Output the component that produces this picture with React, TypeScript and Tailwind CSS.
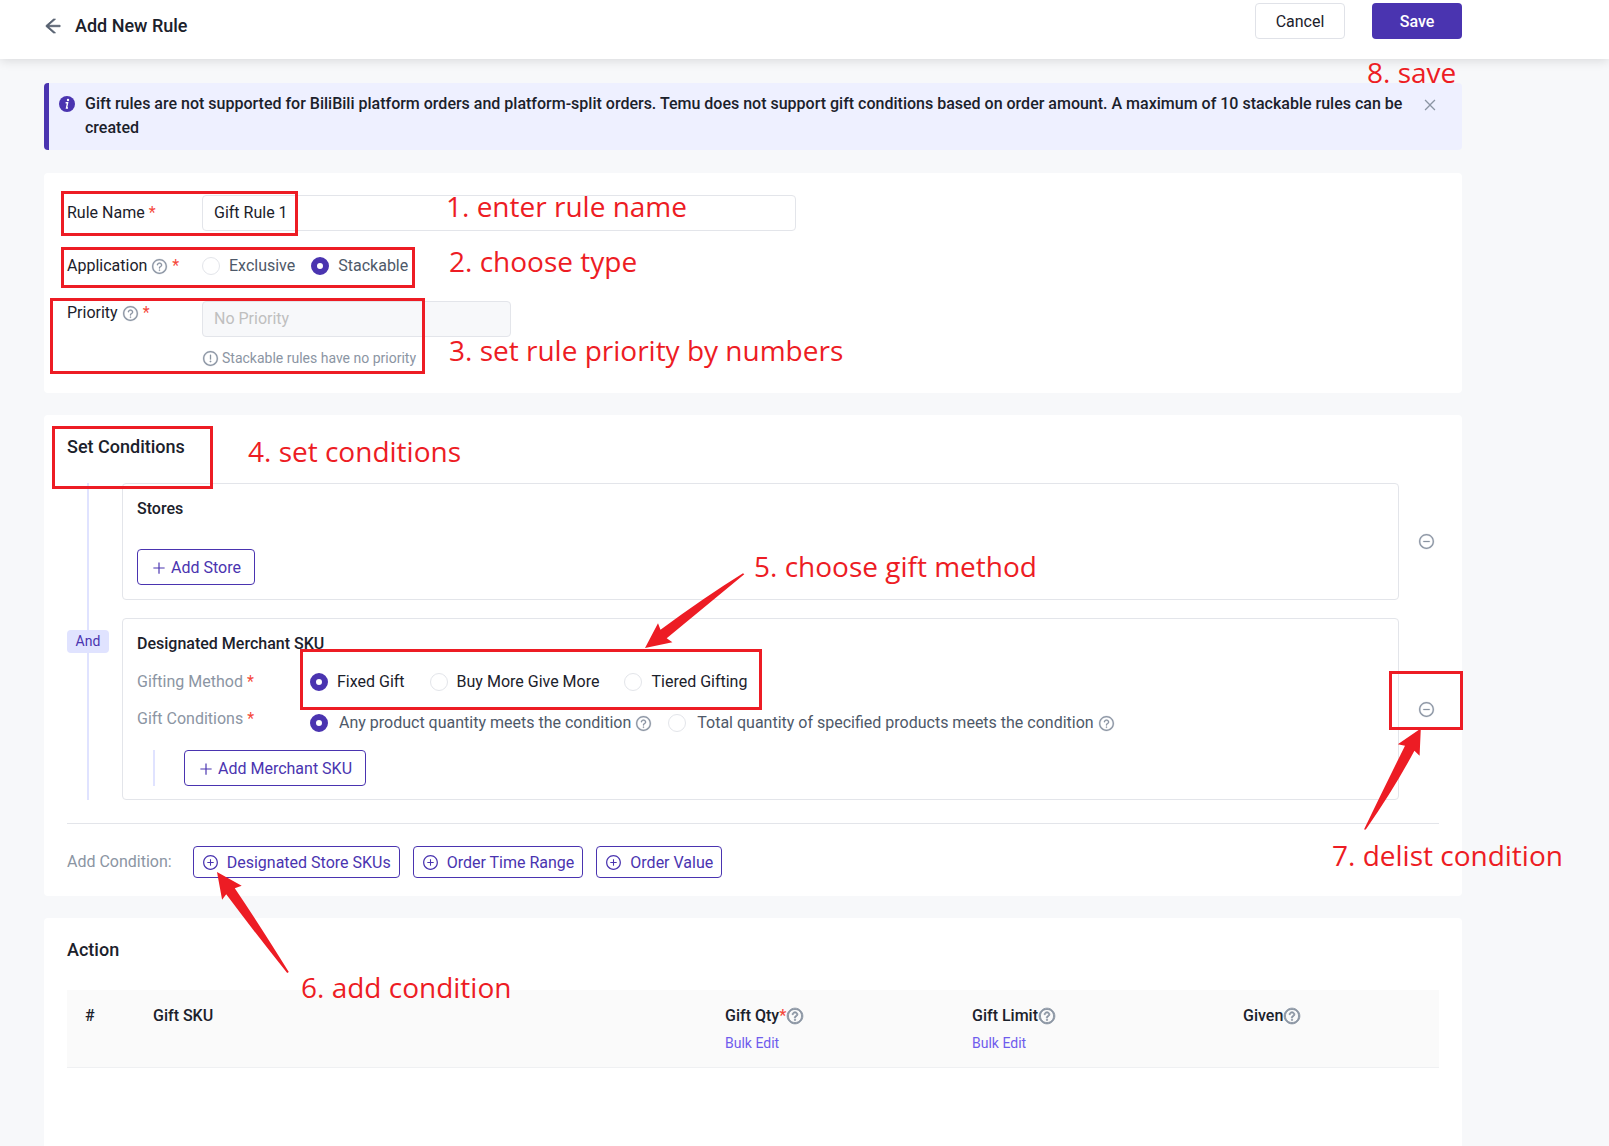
import type { ReactNode } from "react";
import {
  AiOutlineArrowLeft,
  AiOutlineClose,
  AiOutlineExclamationCircle,
  AiOutlineMinusCircle,
  AiOutlinePlus,
  AiOutlinePlusCircle,
  AiOutlineQuestionCircle,
} from "react-icons/ai";

const Help = ({ label, bold }: { label: string; bold?: boolean }) => (
  <button type="button" aria-label={label} className="text-[#8b95a3]">
    <AiOutlineQuestionCircle className={bold ? "size-[18px] stroke-[50]" : "size-[17px] stroke-[15]"} />
  </button>
);

const Required = () => <span className="text-[#f5483b]">*</span>;

const Radio = ({ id, name, checked, labelClass, children }: any) => (
  <div className="flex items-center">
    <input
      type="radio"
      id={id}
      name={name}
      defaultChecked={checked}
      className="size-[18px] shrink-0 appearance-none rounded-full border border-[#e3e5ea] bg-white checked:border-[6px] checked:border-[#4a34b0]"
    />
    <label htmlFor={id} className={labelClass}>
      {children}
    </label>
  </div>
);

const OutlineButton = ({ children }: { children: ReactNode }) => (
  <button
    type="button"
    className="flex h-9 items-center gap-1 rounded border border-[#4a34b0] px-[13px] pt-px text-[#4a34b0]"
  >
    <AiOutlinePlus />
    {children}
  </button>
);

const RemoveButton = ({ label }: { label: string }) => (
  <button type="button" aria-label={label} className="text-[#8b95a3]">
    <AiOutlineMinusCircle className="size-[17px] stroke-[15]" />
  </button>
);

const Card = ({ className = "", children }: any) => (
  <section className={`mb-[22px] rounded bg-white px-[23px] ${className}`}>{children}</section>
);

const extraConditions = ["Designated Store SKUs", "Order Time Range", "Order Value"];

const frames = [
  "left-[61px] top-[191px] h-[45px] w-[237px]",
  "left-[61px] top-[247px] h-[41px] w-[354px]",
  "left-[50px] top-[298px] h-[76px] w-[375px]",
  "left-[52px] top-[426px] h-[63px] w-[161px]",
  "left-[300px] top-[649px] h-[61px] w-[462px]",
  "left-[1389px] top-[671px] h-[59px] w-[74px]",
];

const notes = [
  { text: "1. enter rule name", className: "left-[446px] top-[186px]" },
  { text: "2. choose type", className: "left-[449px] top-[241px]" },
  { text: "3. set rule priority by numbers", className: "left-[449px] top-[330px]" },
  { text: "4. set conditions", className: "left-[248px] top-[431px]" },
  { text: "5. choose gift method", className: "left-[754px] top-[546px]" },
  { text: "6. add condition", className: "left-[301px] top-[967px]" },
  { text: "7. delist condition", className: "left-[1332px] top-[835px]" },
  { text: "8. save", className: "left-[1367px] top-[52px]" },
];

const Notes = () => (
  <div className="pointer-events-none absolute inset-0 overflow-hidden">
    {frames.map((frame) => (
      <div key={frame} className={`absolute border-[3px] border-[#ed1c24] ${frame}`} />
    ))}
    <svg className="absolute left-[645px] top-[573px]" width="100" height="76" fill="#ed1c24">
      <path d="M0 75 L13 50.3 L15.5 56.7 Q60 24 98 0.3 L99.3 1.3 L21.7 65.3 L27.4 69.3 Z" />
    </svg>
    <svg className="absolute left-[217px] top-[872px]" width="73" height="102" fill="#ed1c24">
      <path d="M0 0 L24.7 13.7 L17.8 16.3 Q42 52 71.8 100 L70.2 100.9 Q42 66 9.2 22.3 L5.1 27.7 Z" />
    </svg>
    <svg className="absolute left-[1364px] top-[728px]" width="58" height="103" fill="#ed1c24">
      <path d="M56.8 0.5 L33.8 16.3 L41 17.7 Q20 60 0 101.5 L1.8 101.5 Q30 61 50.4 22.7 L55.6 27.7 Z" />
    </svg>
    {notes.map((note) => (
      <p
        key={note.text}
        className={`absolute whitespace-nowrap font-['Open_Sans',sans-serif] text-[28px] leading-10 text-[#ed1c24] ${note.className}`}
      >
        {note.text}
      </p>
    ))}
  </div>
);

export default function App() {
  return (
    <div className="relative flex min-h-screen flex-col bg-[#f7f8fa] font-[Roboto,sans-serif] text-base leading-6 text-[#1b212b]">
      <header className="flex h-[59px] shrink-0 items-start justify-between bg-white pl-[43px] pr-[147px] pt-[3px] shadow-[0_2px_10px_rgba(0,0,0,0.12)]">
        <div className="flex items-center gap-3 pt-[11px]">
          <button type="button" aria-label="Back" className="text-xl text-[#566070]">
            <AiOutlineArrowLeft className="stroke-[35]" />
          </button>
          <h1 className="text-lg font-medium leading-6">Add New Rule</h1>
        </div>
        <div className="flex gap-[27px]">
          <button type="button" className="h-9 w-[90px] rounded border border-[#e0e2e8] pt-px">
            Cancel
          </button>
          <button type="button" className="h-9 w-[90px] rounded bg-[#4a34b0] pt-px font-medium text-white">
            Save
          </button>
        </div>
      </header>

      <main className="flex flex-1 flex-col pl-11 pr-[147px] pt-6">
        <div className="mb-[23px] flex items-start rounded border-l-[5px] border-[#4a34b0] bg-[#eef0ff] py-[9px] pl-[10px] pr-6">
          <svg className="mt-1 shrink-0" width="16" height="16" viewBox="0 0 16 16">
            <circle cx="8" cy="8" r="8" fill="#4a34b0" />
            <circle cx="9" cy="4" r="1.2" fill="#fff" />
            <path d="M6.6 6.8H8.6L7.5 12H9" fill="none" stroke="#fff" strokeWidth="1.4" />
          </svg>
          <p className="ml-[10px] flex-1 pb-px font-medium">
            Gift rules are not supported for BiliBili platform orders and platform-split orders. Temu
            does not support gift conditions based on order amount. A maximum of 10 stackable rules
            can be created
          </p>
          <button type="button" aria-label="Close" className="ml-3 mt-[5px] text-[#8b95a3]">
            <AiOutlineClose />
          </button>
        </div>

        <Card className="flex flex-col gap-[23px] pb-[23px] pt-[22px]">
          <div className="flex items-center">
            <label htmlFor="rule-name" className="w-[135px]">
              Rule Name <Required />
            </label>
            <input
              id="rule-name"
              defaultValue="Gift Rule 1"
              className="h-9 w-[594px] rounded border border-[#e3e5ea] px-[11px] pb-px"
            />
          </div>
          <div className="flex items-center">
            <div className="flex w-[135px] items-center gap-1">
              Application <Help label="About application" /> <Required />
            </div>
            <div className="flex gap-4 text-[#4e5969]">
              <Radio id="exclusive" name="application" labelClass="pl-[9px]">
                Exclusive
              </Radio>
              <Radio id="stackable" name="application" checked labelClass="pl-[9px]">
                Stackable
              </Radio>
            </div>
          </div>
          <div className="flex items-start">
            <div className="flex w-[135px] items-center gap-1">
              <label htmlFor="priority">Priority</label>
              <Help label="About priority" /> <Required />
            </div>
            <div>
              <input
                id="priority"
                disabled
                placeholder="No Priority"
                className="block h-9 w-[309px] rounded border border-[#e3e5ea] bg-[#f7f8fa] px-[11px] pb-px placeholder:text-[#bfbfbf]"
              />
              <p className="mt-[9px] flex items-center gap-[3px] text-sm leading-6 text-[#8b95a3]">
                <AiOutlineExclamationCircle className="size-[17px] stroke-[15]" />
                Stackable rules have no priority
              </p>
            </div>
          </div>
        </Card>

        <Card className="pb-[18px] pt-5">
          <h2 className="mb-6 text-lg font-medium leading-6">Set Conditions</h2>
          <div className="flex">
            <div className="flex w-[42px] shrink-0 flex-col items-center">
              <div className="w-0.5 flex-1 bg-[#e0e3ff]" />
              <span className="w-full rounded bg-[#e0e3ff] text-center text-sm leading-[23px] text-[#4a34b0]">
                And
              </span>
              <div className="w-0.5 flex-1 bg-[#e0e3ff]" />
            </div>
            <div className="ml-[13px] flex flex-1 flex-col gap-[18px]">
              <div className="flex items-center gap-[19px] pr-1">
                <div className="flex-1 rounded border border-[#e3e5ea] px-[14px] pb-[14px] pt-[13px]">
                  <h3 className="font-medium">Stores</h3>
                  <div className="mt-7 flex">
                    <OutlineButton>Add Store</OutlineButton>
                  </div>
                </div>
                <RemoveButton label="Remove stores condition" />
              </div>
              <div className="flex items-center gap-[19px] pr-1">
                <div className="flex-1 rounded border border-[#e3e5ea] px-[14px] pb-[13px] pt-[13px]">
                  <h3 className="font-medium">Designated Merchant SKU</h3>
                  <div className="mt-[14px] flex items-center">
                    <span className="w-[173px] text-[#8b95a3]">
                      Gifting Method <Required />
                    </span>
                    <div className="flex gap-[25px]">
                      <Radio id="fixed" name="method" checked labelClass="pl-[9px]">
                        Fixed Gift
                      </Radio>
                      <Radio id="buy-more" name="method" labelClass="pl-[9px]">
                        Buy More Give More
                      </Radio>
                      <Radio id="tiered" name="method" labelClass="pl-[9px]">
                        Tiered Gifting
                      </Radio>
                    </div>
                  </div>
                  <div className="mt-[13px] flex items-start">
                    <span className="w-[173px] text-[#8b95a3]">
                      Gift Conditions <Required />
                    </span>
                    <div className="mt-1 flex gap-4 text-[#4e5969]">
                      <div className="flex items-center gap-1">
                        <Radio id="any" name="quantity" checked labelClass="pl-[11px]">
                          Any product quantity meets the condition
                        </Radio>
                        <Help label="About any quantity" />
                      </div>
                      <div className="flex items-center gap-1">
                        <Radio id="total" name="quantity" labelClass="pl-[11px]">
                          Total quantity of specified products meets the condition
                        </Radio>
                        <Help label="About total quantity" />
                      </div>
                    </div>
                  </div>
                  <div className="ml-4 mt-[15px] flex border-l-2 border-[#e0e3ff] pl-[29px]">
                    <OutlineButton>Add Merchant SKU</OutlineButton>
                  </div>
                </div>
                <RemoveButton label="Remove merchant SKU condition" />
              </div>
            </div>
          </div>
          <div className="mt-[23px] flex items-center gap-[13px] border-t border-[#e3e5ea] pt-[22px]">
            <span className="mr-2 text-[#8b95a3]">Add Condition:</span>
            {extraConditions.map((condition) => (
              <button
                key={condition}
                type="button"
                className="flex h-8 items-center gap-2 rounded border border-[#4a34b0] px-2 pt-px text-[#4a34b0]"
              >
                <AiOutlinePlusCircle className="size-[17px]" />
                {condition}
              </button>
            ))}
          </div>
        </Card>

        <section className="flex-1 rounded-t bg-white px-[23px] pt-5">
          <h2 className="mb-7 text-lg font-medium leading-6">Action</h2>
          <table className="w-full table-fixed bg-[#fafafa] text-left">
            <thead>
              <tr className="border-b border-[#eff0f2] align-top *:h-[77px] *:px-[18px] *:pt-[14px] *:font-medium">
                <th className="w-[68px]">#</th>
                <th>Gift SKU</th>
                <th className="w-[247px]">
                  <div className="mb-[3px] flex items-center">
                    Gift Qty
                    <Required />
                    <Help label="About gift quantity" bold />
                  </div>
                  <a href="#qty" className="block text-sm leading-6 font-normal text-[#6f5ced]">
                    Bulk Edit
                  </a>
                </th>
                <th className="w-[271px]">
                  <div className="mb-[3px] flex items-center">
                    Gift Limit
                    <Help label="About gift limit" bold />
                  </div>
                  <a href="#limit" className="block text-sm leading-6 font-normal text-[#6f5ced]">
                    Bulk Edit
                  </a>
                </th>
                <th className="w-[214px]">
                  <div className="flex items-center">
                    Given
                    <Help label="About given" bold />
                  </div>
                </th>
              </tr>
            </thead>
          </table>
        </section>
      </main>

      <Notes />
    </div>
  );
}
